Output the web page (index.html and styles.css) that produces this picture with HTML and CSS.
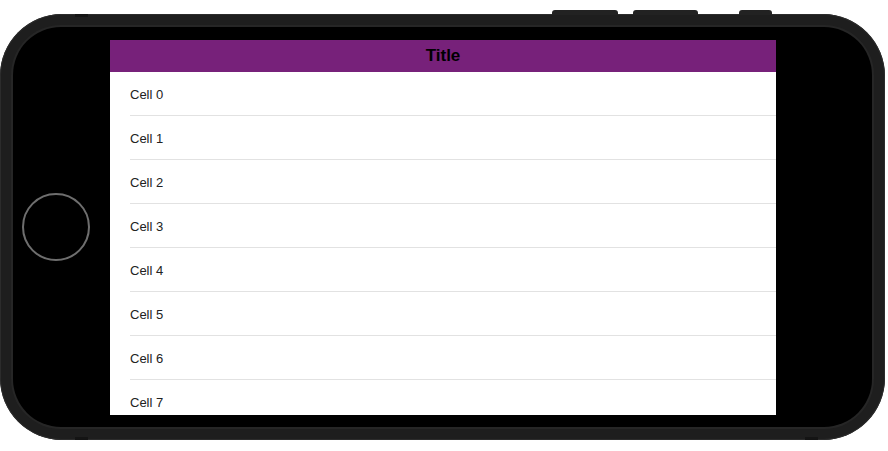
FILE: index.html
```html
<!DOCTYPE html>
<html>
<head>
<meta charset="utf-8">
<link rel="stylesheet" href="styles.css">
</head>
<body>
<div class="phone">
  <span class="btn btn-a"></span>
  <span class="btn btn-b"></span>
  <span class="btn btn-c"></span>
  <span class="btn btn-d"></span>
  <span class="ant ant-tl"></span>
  <span class="ant ant-bl"></span>
  <span class="ant ant-br"></span>
  <div class="inner">
    <div class="home-col"><div class="home"></div></div>
    <div class="screen">
      <div class="navbar">Title</div>
      <div class="list">
        <div class="cell"><span>Cell 0</span></div>
        <div class="cell"><span>Cell 1</span></div>
        <div class="cell"><span>Cell 2</span></div>
        <div class="cell"><span>Cell 3</span></div>
        <div class="cell"><span>Cell 4</span></div>
        <div class="cell"><span>Cell 5</span></div>
        <div class="cell"><span>Cell 6</span></div>
        <div class="cell"><span>Cell 7</span></div>
      </div>
    </div>
  </div>
</div>
</body>
</html>
```
FILE: styles.css
```css
html, body {
  margin: 0;
  padding: 0;
  background: #ffffff;
}
body {
  padding-top: 14px;
  font-family: "Liberation Sans", Arial, sans-serif;
}
.phone {
  position: relative;
  width: 885px;
  height: 426px;
  box-sizing: border-box;
  padding: 13px 13px 13px 13px;
  border-radius: 62px;
  background: #1e1e1e;
  box-shadow: inset 0 0 0 1px #2c2c2c;
}
.btn {
  position: absolute;
  top: -4px;
  height: 5px;
  background: #222;
  border-radius: 3px 3px 0 0;
}
.btn-a { left: 552px; width: 66px; }
.btn-b { left: 633px; width: 65px; }
.btn-c { left: 739px; width: 33px; }
.btn-d { left: 633px; width: 65px; top: auto; bottom: -5px; border-radius: 0 0 3px 3px; }
.ant {
  position: absolute;
  width: 13px;
  height: 3px;
  background: #141414;
}
.ant-tl { left: 75px; top: 0; }
.ant-bl { left: 75px; bottom: 0; }
.ant-br { left: 805px; bottom: 0; }
.inner {
  display: flex;
  height: 100%;
  box-sizing: border-box;
  background: #000;
  border-radius: 48px;
  padding: 13px 96px 12px 0;
  box-shadow: 0 0 0 2px #262626;
}
.home-col {
  width: 97px;
  flex: none;
  display: flex;
  align-items: center;
  padding-left: 9px;
  box-sizing: border-box;
  margin-top: -13px;
  margin-bottom: -12px;
}
.home {
  width: 64px;
  height: 64px;
  border-radius: 50%;
  border: 2px solid #6e6e6e;
}
.screen {
  flex: 1;
  background: #fff;
  overflow: hidden;
  display: flex;
  flex-direction: column;
}
.navbar {
  height: 32px;
  flex: none;
  background: #77217a;
  color: #000;
  font-weight: bold;
  font-size: 17px;
  display: flex;
  align-items: center;
  justify-content: center;
}
.list {
  display: flex;
  flex-direction: column;
}
.cell {
  height: 44px;
  flex: none;
  padding-left: 20px;
  display: flex;
}
.cell span {
  flex: 1;
  display: flex;
  align-items: center;
  padding-top: 2px;
  border-bottom: 1px solid #e2e2e2;
  font-size: 13px;
  color: #222;
}
```
